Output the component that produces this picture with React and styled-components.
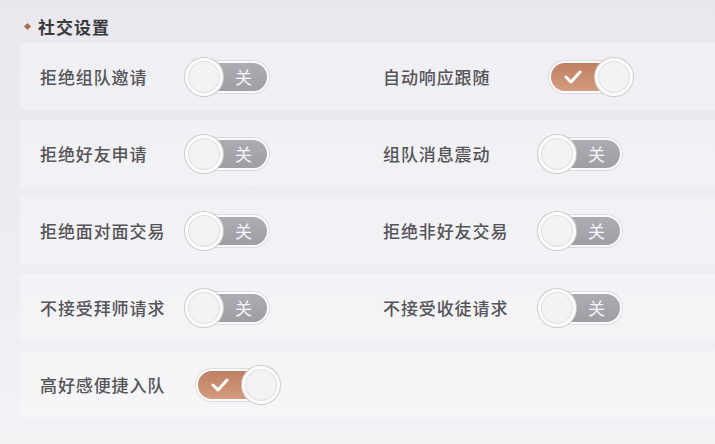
import React from "react";
import styled, { createGlobalStyle } from "styled-components";

const Global = createGlobalStyle`
  html, body { margin: 0; padding: 0; }
  body {
    width: 715px;
    height: 444px;
    overflow: hidden;
    background: linear-gradient(180deg, #e9e8ee 0%, #eeedf2 60%, #f3f2f5 100%);
    font-family: "Noto Sans CJK SC", "Noto Sans", sans-serif;
  }
`;

const Page = styled.div`
  padding: 14px 0 0 20px;
  box-sizing: border-box;
  width: 715px;
  height: 444px;
`;

const Header = styled.div`
  display: flex;
  align-items: center;
  gap: 8px;
  height: 24px;
  margin-bottom: 5px;
  padding-left: 5px;
  font-size: 17px;
  font-weight: 700;
  letter-spacing: 1px;
  color: #3a393c;
`;

const Diamond = styled.span`
  width: 5px;
  height: 5px;
  background: #a86f4e;
  transform: rotate(45deg);
`;

const List = styled.div`
  display: flex;
  flex-direction: column;
  gap: 10px;
`;

const Row = styled.div`
  display: grid;
  grid-template-columns: 145px 198px 155px auto;
  align-items: center;
  height: 67px;
  padding-left: 20px;
  background: rgba(255, 255, 255, 0.3);
`;

const Label = styled.span`
  font-size: 17px;
  font-weight: 500;
  letter-spacing: 0.9px;
  color: #555459;
  white-space: nowrap;
`;

const ToggleBox = styled.div`
  position: relative;
  width: 85px;
  height: 38px;
  margin-left: ${(p) => (p.$on ? "10px" : "0")};
`;

const Track = styled.div`
  position: absolute;
  left: 1px;
  right: 1px;
  top: 3px;
  bottom: 3px;
  border-radius: 16px;
  border: 2px solid #fbfafc;
  box-shadow: 0 0 0 1px rgba(200, 196, 204, 0.5);
  background: ${(p) =>
    p.$on
      ? "linear-gradient(180deg, #bd7f61 0%, #d49c80 100%)"
      : "linear-gradient(180deg, #adacb2 0%, #9f9ea4 100%)"};
  display: flex;
  align-items: center;
  justify-content: ${(p) => (p.$on ? "flex-start" : "flex-end")};
  box-sizing: border-box;
  color: #fff;
  font-size: 17px;
`;

const OffText = styled.span`
  margin-right: 15px;
  line-height: 1;
  color: #f7f7f9;
`;

const Check = styled.svg`
  margin-left: 13px;
`;

const Knob = styled.div`
  position: absolute;
  top: 0;
  ${(p) => (p.$on ? "right: 0;" : "left: 0;")}
  width: 38px;
  height: 38px;
  box-sizing: border-box;
  border-radius: 50%;
  background: #f3f3f5;
  border: 3px solid #fdfcfd;
  box-shadow: 0 0 0 1px #d4c8c5, inset 0 0 0 1px #e0dcdd;
`;

function Toggle({ on }) {
  return (
    <ToggleBox $on={on}>
      <Track $on={on}>
        {on ? (
          <Check width="18" height="14" viewBox="0 0 18 14">
            <polyline
              points="2,7 7,12 16,2"
              fill="none"
              stroke="#fff"
              strokeWidth="3"
              strokeLinecap="round"
              strokeLinejoin="round"
            />
          </Check>
        ) : (
          <OffText>关</OffText>
        )}
      </Track>
      <Knob $on={on} />
    </ToggleBox>
  );
}

const rows = [
  [["拒绝组队邀请", false], ["自动响应跟随", true]],
  [["拒绝好友申请", false], ["组队消息震动", false]],
  [["拒绝面对面交易", false], ["拒绝非好友交易", false]],
  [["不接受拜师请求", false], ["不接受收徒请求", false]],
  [["高好感便捷入队", true]],
];

export default function App() {
  return (
    <>
      <Global />
      <Page>
        <Header>
          <Diamond />
          社交设置
        </Header>
        <List>
          {rows.map((r, i) => (
            <Row key={i}>
              {r.map(([label, on]) => (
                <React.Fragment key={label}>
                  <Label>{label}</Label>
                  <Toggle on={on} />
                </React.Fragment>
              ))}
            </Row>
          ))}
        </List>
      </Page>
    </>
  );
}
